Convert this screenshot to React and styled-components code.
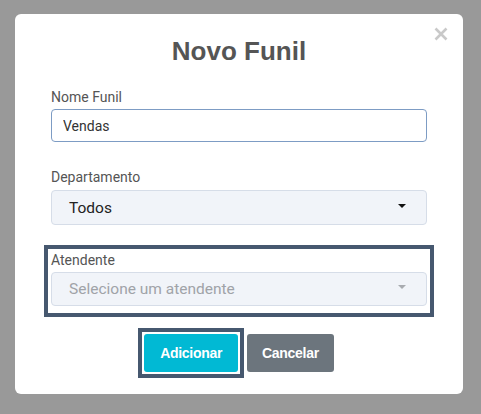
import React from 'react';
import styled, { createGlobalStyle } from 'styled-components';

const Global = createGlobalStyle`
  html, body {
    margin: 0;
    padding: 0;
    background: #999999;
  }
  * { box-sizing: border-box; }
`;

const Overlay = styled.div`
  width: 481px;
  height: 414px;
  padding: 14px 18px 0 15px;
  background: #999999;
`;

const Modal = styled.div`
  position: relative;
  width: 448px;
  background: #fff;
  border-radius: 6px;
  padding: 22px 36px 22px 36px;
  font-family: Roboto, "Liberation Sans", sans-serif;
`;

const Close = styled.button`
  position: absolute;
  top: 10px;
  right: 12px;
  border: 0;
  background: none;
  padding: 0;
  width: 20px;
  height: 20px;
  display: flex;
  align-items: center;
  justify-content: center;
  cursor: pointer;
`;

const Title = styled.h2`
  margin: 0 0 22px;
  text-align: center;
  font-family: "Liberation Sans", Arial, sans-serif;
  font-weight: bold;
  font-size: 26px;
  line-height: 30px;
  color: #555555;
`;

const Field = styled.div`
  display: flex;
  flex-direction: column;
  margin-bottom: ${p => p.gap || 0}px;
`;

const Group = styled(Field)`
  outline: 4px solid #46586f;
  outline-offset: 3px;
  padding-bottom: 4px;
`;

const Label = styled.label`
  font-size: 14px;
  line-height: ${p => p.lh || 18}px;
  color: #555;
  margin-bottom: ${p => p.mb || 4}px;
`;

const Input = styled.input`
  height: 33px;
  border: 1px solid #7d9cc4;
  border-radius: 4px;
  padding: 0 11px;
  font-family: Roboto, "Liberation Sans", sans-serif;
  font-size: 14px;
  color: #333;
  outline: none;
`;

const Select = styled.div`
  height: ${p => p.h || 35}px;
  display: flex;
  align-items: center;
  justify-content: space-between;
  background: #f1f4f9;
  border: 1px solid #d6dde8;
  border-radius: 4px;
  padding: 0 20px 0 17px;
  font-size: 15.5px;
  color: ${p => (p.placeholder ? '#a0a3a8' : '#222')};
`;

const Caret = styled.span`
  width: 0;
  height: 0;
  border-left: 4px solid transparent;
  border-right: 4px solid transparent;
  border-top: 4px solid ${p => p.color || '#111'};
  margin-top: -4px;
`;

const Actions = styled.div`
  display: flex;
  justify-content: center;
  align-items: center;
  gap: 9px;
  margin-top: 24px;
`;

/* focus ring drawn square around the button, without taking layout space */
const FocusRing = styled.span`
  display: flex;
  border: 4px solid #46586f;
  padding: 2px;
  margin: -6px;
`;

const Button = styled.button`
  height: 38px;
  padding: 0 ${p => p.px || 15}px;
  border: 0;
  border-radius: 3px;
  background: ${p => p.bg};
  color: #fff;
  font-family: "Liberation Sans", Arial, sans-serif;
  font-weight: bold;
  font-size: 14px;
  letter-spacing: -0.3px;
  cursor: pointer;
  outline: none;
`;

export default function App() {
  return (
    <>
      <Global />
      <Overlay>
        <Modal>
          <Close aria-label="Fechar">
            <svg width="14" height="14" viewBox="0 0 14 14">
              <path d="M1.5 1.5 L12.5 12.5 M12.5 1.5 L1.5 12.5" stroke="#c9c9c9" strokeWidth="2.6" strokeLinecap="butt" />
            </svg>
          </Close>
          <Title>Novo Funil</Title>
          <Field gap={26}>
            <Label mb={3}>Nome Funil</Label>
            <Input readOnly value="Vendas" />
          </Field>
          <Field gap={27}>
            <Label>Departamento</Label>
            <Select>
              Todos
              <Caret />
            </Select>
          </Field>
          <Group>
            <Label lh={16}>Atendente</Label>
            <Select h={34} placeholder="true">
              Selecione um atendente
              <Caret color="#a8abb0" />
            </Select>
          </Group>
          <Actions>
            <FocusRing>
              <Button bg="#01b9d4" px={16}>Adicionar</Button>
            </FocusRing>
            <Button bg="#6c757d" px={15}>Cancelar</Button>
          </Actions>
        </Modal>
      </Overlay>
    </>
  );
}
